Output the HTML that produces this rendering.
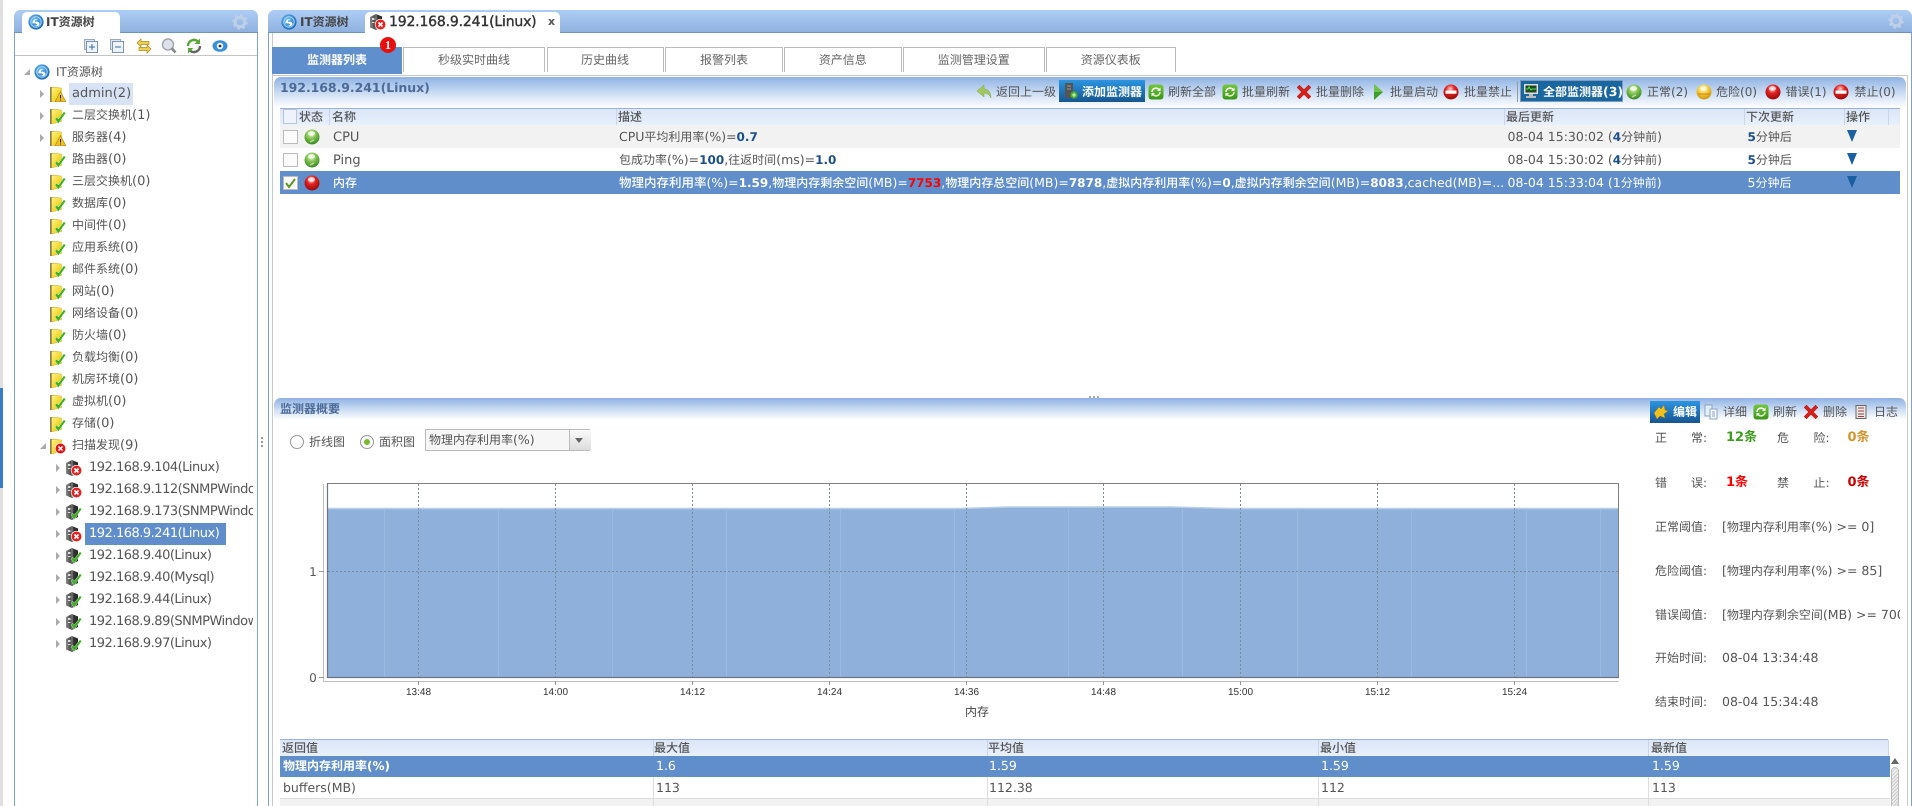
<!DOCTYPE html>
<html><head><meta charset="utf-8"><title>IT资源树</title>
<style>
html,body{margin:0;padding:0;background:#fff;width:1912px;height:806px;overflow:hidden}
#r{position:relative;width:1912px;height:806px;overflow:hidden;font:12px/16px "DejaVu Sans","Noto Sans CJK SC",sans-serif;color:#555;filter:blur(.3px);text-rendering:geometricPrecision}
#r div,#r svg.k{position:absolute;white-space:nowrap}
#r i{font-style:normal;font-size:13px}
#r .ip i{letter-spacing:-.5px}
#r b{font-size:12px;color:#1a4f8a;font-weight:700}
.hd{background:linear-gradient(#adcdf5,#8fb1de);border-bottom:1px solid #6f93c4}
.ar{width:0;height:0;border-left:4px solid #aaa;border-top:4px solid transparent;border-bottom:4px solid transparent}
.dn{width:0;height:0;border-right:6px solid #aaa;border-top:6px solid transparent}
.st{box-sizing:border-box;top:47px;height:25px;border:1.5px solid #bbb;border-bottom:0;text-align:center;line-height:24px;color:#666}
.ph{background:linear-gradient(#8fb2e3,#cfdff5 55%,#fff);border-radius:7px 7px 0 0}
.gh{background:linear-gradient(#dbe6f7,#e8f0fc);border-top:1px solid #9db3d3}
.sp{width:1px;background:#c9d5e8}
</style></head><body><div id="r">

<svg width="0" height="0" style="position:absolute">
<defs>
<linearGradient id="fy" x1="0" y1="0" x2="1" y2="1"><stop offset="0" stop-color="#fff388"/><stop offset=".6" stop-color="#f2d62c"/><stop offset="1" stop-color="#e0b818"/></linearGradient>
<linearGradient id="sv" x1="0" y1="0" x2="1" y2="0"><stop offset="0" stop-color="#8a8a8a"/><stop offset=".45" stop-color="#444"/><stop offset="1" stop-color="#222"/></linearGradient>
<radialGradient id="lg" cx=".4" cy=".35" r=".7"><stop offset="0" stop-color="#6fc0f4"/><stop offset="1" stop-color="#1467b8"/></radialGradient>
<radialGradient id="bg" cx=".45" cy=".3" r=".75"><stop offset="0" stop-color="#e8f8d0"/><stop offset=".45" stop-color="#7cc04a"/><stop offset="1" stop-color="#2d7f20"/></radialGradient>
<radialGradient id="br" cx=".45" cy=".3" r=".75"><stop offset="0" stop-color="#ffd0d0"/><stop offset=".4" stop-color="#e02020"/><stop offset="1" stop-color="#8f0808"/></radialGradient>
<radialGradient id="by" cx=".45" cy=".3" r=".75"><stop offset="0" stop-color="#fff8c0"/><stop offset=".5" stop-color="#f0c830"/><stop offset="1" stop-color="#c88a10"/></radialGradient>
<linearGradient id="rf" x1="0" y1="0" x2="0" y2="1"><stop offset="0" stop-color="#74c83c"/><stop offset="1" stop-color="#3a9418"/></linearGradient>
<symbol id="logo" viewBox="0 0 16 16"><circle cx="8" cy="8" r="7.6" fill="url(#lg)"/><circle cx="8" cy="8" r="5.2" fill="none" stroke="#a8d4f6" stroke-width="1"/><path d="M4.500 9.500c-.5-3.500 3-5.500 6-4-2.500-.5-4 1-3.500 2.500 2-.7 4.500 0 4.500 2 0 2-3.500 3-6 1.500 2 .5 3.500 0 3.500-1s-2.500-1.500-4.500-1z" fill="#fff"/></symbol>
<symbol id="fo" viewBox="0 0 16 16"><path d="M.5 1l9 .5v12l-9 2.500z" fill="#d8b61c"/><path d="M1.500 1.500l10 .5v11.500l-10 2.500z" fill="url(#fy)" stroke="#cfae1c" stroke-width=".4"/><path d="M.8 1v15" stroke="#6b6030" stroke-width="1.200"/></symbol>
<symbol id="fok" viewBox="0 0 16 16"><use href="#fo"/><path d="M5 11l3.300 4.500L15.800 5l-2-1.200-5.300 7.200-2-1.800z" fill="#3fae28" stroke="#e8ffe0" stroke-width=".4"/></symbol>
<symbol id="fwn" viewBox="0 0 16 16"><use href="#fo"/><path d="M10.500 5.500l5.300 10.300H5z" fill="#f0c020" stroke="#a88410" stroke-width=".6"/><path d="M10.500 9v3.500M10.500 13.500v1" stroke="#222" stroke-width="1"/></symbol>
<symbol id="fer" viewBox="0 0 16 16"><use href="#fo"/><circle cx="10.500" cy="10.500" r="5.300" fill="#d81818" stroke="#fff" stroke-width=".6"/><path d="M8.500 8.500l4 4M12.500 8.500l-4 4" stroke="#fff" stroke-width="1.500"/></symbol>
<symbol id="se" viewBox="0 0 16 16"><path d="M0 3l6-3 6 2.500v10.500l-6 3-6-2.500z" fill="url(#sv)"/><path d="M6 .5v15" stroke="#bbb" stroke-width=".7"/><path d="M2 4h2.500v2H2zM2 8h2.500v1H2z" fill="#ddd"/></symbol>
<symbol id="sok" viewBox="0 0 16 16"><use href="#se"/><path d="M5 11l3.300 4.500L15.800 5l-2-1.200-5.300 7.200-2-1.800z" fill="#3fae28" stroke="#e8ffe0" stroke-width=".4"/></symbol>
<symbol id="ser" viewBox="0 0 16 16"><use href="#se"/><circle cx="10.500" cy="10.500" r="5.300" fill="#e02424" stroke="#fff" stroke-width=".6"/><path d="M8.500 8.500l4 4M12.500 8.500l-4 4" stroke="#fff" stroke-width="1.600"/></symbol>
<symbol id="bgn" viewBox="0 0 16 16"><circle cx="8" cy="8" r="7.500" fill="url(#bg)"/><ellipse cx="7.500" cy="4.500" rx="3.500" ry="2.300" fill="#fff" opacity=".75"/><path d="M6 13l4-2" stroke="#bcd8a8" stroke-width="1.500"/></symbol>
<symbol id="brd" viewBox="0 0 16 16"><circle cx="8" cy="8" r="7.500" fill="url(#br)"/><ellipse cx="7.500" cy="4.500" rx="3.500" ry="2.300" fill="#fff" opacity=".7"/></symbol>
<symbol id="byl" viewBox="0 0 16 16"><circle cx="8" cy="8" r="7.500" fill="url(#by)"/><ellipse cx="7.500" cy="4.500" rx="3.500" ry="2.300" fill="#fff" opacity=".6"/><path d="M2 10h12" stroke="#d88a18" stroke-width="2" opacity=".6"/></symbol>
<symbol id="ban" viewBox="0 0 16 16"><circle cx="8" cy="8" r="7.500" fill="url(#br)"/><rect x="2.500" y="6.500" width="11" height="3.200" fill="#fff"/></symbol>
<symbol id="rfr" viewBox="0 0 16 16"><rect x=".5" y=".5" width="15" height="15" rx="3" fill="url(#rf)"/><path d="M4 8a4 4 0 0 1 7-2.500" fill="none" stroke="#fff" stroke-width="1.500"/><path d="M12 8a4 4 0 0 1-7 2.500" fill="none" stroke="#dff2c8" stroke-width="1.500"/><path d="M12.500 3.500v3.500h-3.500zM3.500 12.500v-3.500h3.500z" fill="#fff"/></symbol>
<symbol id="xx" viewBox="0 0 16 16"><path d="M1 3.500l2.500-2.500 4.500 4.500 4.500-4.500 2.500 2.500-4.500 4.500 4.500 4.500-2.500 2.500-4.500-4.500-4.500 4.500-2.500-2.500 4.500-4.500z" fill="#d4211c" stroke="#a01010" stroke-width=".4"/></symbol>
<symbol id="gear" viewBox="0 0 16 16"><circle cx="8" cy="8" r="4.800" fill="none" stroke="#bdd0e8" stroke-width="3"/><circle cx="8" cy="8" r="6.700" fill="none" stroke="#bdd0e8" stroke-width="2" stroke-dasharray="2.600 2.660"/></symbol>
</defs></svg>

<!-- outer strip -->
<div style="left:0;top:0;width:2.500px;height:806px;background:#e0e0e0"></div>
<div style="left:0;top:388px;width:2.500px;height:100px;background:#3a7cc8"></div>

<!-- left panel -->
<div style="left:14px;top:10px;width:242px;height:800px;border:1.200px solid #7f9fd6;border-radius:7px 7px 0 0;background:#fff;box-sizing:content-box"></div>
<div class="hd" style="left:14px;top:10px;width:244px;height:22px;border-radius:7px 7px 0 0"></div>
<div style="left:22px;top:12px;width:98px;height:21px;background:#fff;border-radius:5px 5px 0 0"></div>
<svg class="k" style="left:28px;top:14px" width="16" height="16"><use href="#logo"/></svg>
<div style="left:46px;top:14px;font-weight:700;color:#444">IT资源树</div>
<svg class="k" style="left:232px;top:14px" width="16" height="16"><use href="#gear"/></svg>
<div style="left:15px;top:55px;width:242px;height:1px;background:#c4c4c4"></div>

<svg class="k" style="left:83px;top:38px" width="146" height="16" viewBox="0 0 146 16">
<rect x="1.500" y="1.500" width="10" height="10" fill="#dfe5ee" stroke="#9aa8bc"/><rect x="3.500" y="3.500" width="11" height="11" fill="#eef3fa" stroke="#7d93b4"/><path d="M6 9h6M9 6v6" stroke="#3a6ea8"/>
<rect x="27.500" y="1.500" width="10" height="10" fill="#dfe5ee" stroke="#9aa8bc"/><rect x="29.500" y="3.500" width="11" height="11" fill="#eef3fa" stroke="#7d93b4"/><path d="M32 9h6" stroke="#3a6ea8"/>
<path d="M54 5l4-4v2.500h8v3h-8V9zM68 11l-4-4v2.500h-8v3h8V15z" fill="#f0cf50" stroke="#a88a20" stroke-width=".7"/>
<circle cx="85" cy="6.500" r="5.500" fill="#dfe2e8" stroke="#a0a4ac" stroke-width="1.400"/><path d="M88.500 10l4 4.500" stroke="#888" stroke-width="2.800"/>
<path d="M105 8a6 6 0 0 1 10-4.500" fill="none" stroke="#5aa838" stroke-width="2.400"/><path d="M117 8a6 6 0 0 1-10 4.500" fill="none" stroke="#666" stroke-width="2.400"/><path d="M117 .5V6h-5.500zM105 15.500V10h5.500z" fill="#5aa838"/>
<ellipse cx="137" cy="8" rx="7.500" ry="5.800" fill="#3a90d8"/><circle cx="137" cy="8" r="3.200" fill="#fff"/><circle cx="137" cy="8" r="1.400" fill="#234"/>
</svg>

<!-- tree -->
<div class="dn" style="left:24px;top:69px"></div>
<svg class="k" style="left:34px;top:64px" width="16" height="16"><use href="#logo"/></svg>
<div style="left:56px;top:64px">IT资源树</div>
<div style="left:69px;top:83px;width:64px;height:22px;background:#d8e4f6"></div>

<div class="ar" style="left:40px;top:90px"></div><svg class="k" style="left:50px;top:86px" width="16" height="16"><use href="#fwn"/></svg><div style="left:72px;top:85px"><i>admin(2)</i></div>
<div class="ar" style="left:40px;top:112px"></div><svg class="k" style="left:50px;top:108px" width="16" height="16"><use href="#fok"/></svg><div style="left:72px;top:107px">二层交换机<i>(1)</i></div>
<div class="ar" style="left:40px;top:134px"></div><svg class="k" style="left:50px;top:130px" width="16" height="16"><use href="#fwn"/></svg><div style="left:72px;top:129px">服务器<i>(4)</i></div>
<svg class="k" style="left:50px;top:152px" width="16" height="16"><use href="#fok"/></svg><div style="left:72px;top:151px">路由器<i>(0)</i></div>
<svg class="k" style="left:50px;top:174px" width="16" height="16"><use href="#fok"/></svg><div style="left:72px;top:173px">三层交换机<i>(0)</i></div>
<svg class="k" style="left:50px;top:196px" width="16" height="16"><use href="#fok"/></svg><div style="left:72px;top:195px">数据库<i>(0)</i></div>
<svg class="k" style="left:50px;top:218px" width="16" height="16"><use href="#fok"/></svg><div style="left:72px;top:217px">中间件<i>(0)</i></div>
<svg class="k" style="left:50px;top:240px" width="16" height="16"><use href="#fok"/></svg><div style="left:72px;top:239px">应用系统<i>(0)</i></div>
<svg class="k" style="left:50px;top:262px" width="16" height="16"><use href="#fok"/></svg><div style="left:72px;top:261px">邮件系统<i>(0)</i></div>
<svg class="k" style="left:50px;top:284px" width="16" height="16"><use href="#fok"/></svg><div style="left:72px;top:283px">网站<i>(0)</i></div>
<svg class="k" style="left:50px;top:306px" width="16" height="16"><use href="#fok"/></svg><div style="left:72px;top:305px">网络设备<i>(0)</i></div>
<svg class="k" style="left:50px;top:328px" width="16" height="16"><use href="#fok"/></svg><div style="left:72px;top:327px">防火墙<i>(0)</i></div>
<svg class="k" style="left:50px;top:350px" width="16" height="16"><use href="#fok"/></svg><div style="left:72px;top:349px">负载均衡<i>(0)</i></div>
<svg class="k" style="left:50px;top:372px" width="16" height="16"><use href="#fok"/></svg><div style="left:72px;top:371px">机房环境<i>(0)</i></div>
<svg class="k" style="left:50px;top:394px" width="16" height="16"><use href="#fok"/></svg><div style="left:72px;top:393px">虚拟机<i>(0)</i></div>
<svg class="k" style="left:50px;top:416px" width="16" height="16"><use href="#fok"/></svg><div style="left:72px;top:415px">存储<i>(0)</i></div>
<div class="dn" style="left:40px;top:443px"></div><svg class="k" style="left:50px;top:438px" width="16" height="16"><use href="#fer"/></svg><div style="left:72px;top:437px">扫描发现<i>(9)</i></div>

<div style="left:85px;top:523px;width:141px;height:22px;background:#5f8ecb"></div>
<div class="ar" style="left:56px;top:464px"></div><svg class="k" style="left:66px;top:460px" width="16" height="16"><use href="#ser"/></svg><div class="ip" style="left:89px;top:459px;width:164px;overflow:hidden"><i>192.168.9.104(Linux)</i></div>
<div class="ar" style="left:56px;top:486px"></div><svg class="k" style="left:66px;top:482px" width="16" height="16"><use href="#ser"/></svg><div class="ip" style="left:89px;top:481px;width:164px;overflow:hidden"><i>192.168.9.112(SNMPWindows)</i></div>
<div class="ar" style="left:56px;top:508px"></div><svg class="k" style="left:66px;top:504px" width="16" height="16"><use href="#sok"/></svg><div class="ip" style="left:89px;top:503px;width:164px;overflow:hidden"><i>192.168.9.173(SNMPWindows)</i></div>
<div class="ar" style="left:56px;top:530px"></div><svg class="k" style="left:66px;top:526px" width="16" height="16"><use href="#ser"/></svg><div class="ip" style="left:89px;top:525px;color:#fff"><i>192.168.9.241(Linux)</i></div>
<div class="ar" style="left:56px;top:552px"></div><svg class="k" style="left:66px;top:548px" width="16" height="16"><use href="#sok"/></svg><div class="ip" style="left:89px;top:547px"><i>192.168.9.40(Linux)</i></div>
<div class="ar" style="left:56px;top:574px"></div><svg class="k" style="left:66px;top:570px" width="16" height="16"><use href="#sok"/></svg><div class="ip" style="left:89px;top:569px"><i>192.168.9.40(Mysql)</i></div>
<div class="ar" style="left:56px;top:596px"></div><svg class="k" style="left:66px;top:592px" width="16" height="16"><use href="#sok"/></svg><div class="ip" style="left:89px;top:591px"><i>192.168.9.44(Linux)</i></div>
<div class="ar" style="left:56px;top:618px"></div><svg class="k" style="left:66px;top:614px" width="16" height="16"><use href="#sok"/></svg><div class="ip" style="left:89px;top:613px;width:164px;overflow:hidden"><i>192.168.9.89(SNMPWindows)</i></div>
<div class="ar" style="left:56px;top:640px"></div><svg class="k" style="left:66px;top:636px" width="16" height="16"><use href="#sok"/></svg><div class="ip" style="left:89px;top:635px"><i>192.168.9.97(Linux)</i></div>

<!-- vertical splitter -->
<div style="left:261px;top:437px;width:2px;height:2px;background:#999"></div>
<div style="left:261px;top:441px;width:2px;height:2px;background:#999"></div>
<div style="left:261px;top:445px;width:2px;height:2px;background:#999"></div>

<!-- main panel -->
<div style="left:268px;top:10px;width:1642px;height:800px;border:1.200px solid #7f9fd6;border-radius:7px 7px 0 0"></div>
<div class="hd" style="left:268px;top:10px;width:1644px;height:22px;border-radius:7px 7px 0 0"></div>
<svg class="k" style="left:1888px;top:13px" width="16" height="16"><use href="#gear"/></svg>
<svg class="k" style="left:281px;top:14px" width="16" height="16"><use href="#logo"/></svg>
<div style="left:300px;top:14px;font-weight:700;color:#444">IT资源树</div>
<div style="left:364.500px;top:12px;width:195px;height:21px;background:#fff;border-radius:5px 5px 0 0"></div>
<svg class="k" style="left:370px;top:14px" width="16" height="16"><use href="#ser"/></svg>
<div style="left:389px;top:14px;color:#333;font-size:14px;font-weight:400;-webkit-text-stroke:.4px #333;letter-spacing:-.18px">192.168.9.241(Linux)</div>
<div style="left:548px;top:14px;font-weight:700;color:#555;font-size:11px">x</div>

<div style="left:272px;top:33px;width:1px;height:780px;background:#c8c8c8"></div>
<div style="left:1907px;top:75px;width:1px;height:740px;background:#c8c8c8"></div>
<div style="left:272px;top:75px;width:1636px;height:1px;background:#c8c8c8"></div>

<!-- sub tabs -->
<div class="st" style="left:272px;width:130px;height:27px;background:#5f8fcc;border-color:#5f8fcc;color:#fff;font-weight:700">监测器列表</div>
<div class="st" style="left:403px;width:142px">秒级实时曲线</div>
<div class="st" style="left:546.500px;width:117px">历史曲线</div>
<div class="st" style="left:665px;width:118px">报警列表</div>
<div class="st" style="left:784px;width:117.500px">资产信息</div>
<div class="st" style="left:903px;width:141.500px">监测管理设置</div>
<div class="st" style="left:1046px;width:129.500px">资源仪表板</div>
<div style="left:380px;top:37px;width:16px;height:16px;border-radius:8px;background:#e80f0f;color:#fff;text-align:center;font-weight:700;font-size:12px;line-height:16px;font-family:'Liberation Serif',serif">1</div>

<!-- top section header -->
<div class="ph" style="left:274px;top:77px;width:1632px;height:31px"></div>
<div style="left:280px;top:80px;color:#4b6a98;font-weight:700;font-size:12.500px;letter-spacing:-.05px">192.168.9.241(Linux)</div>

<svg class="k" style="left:976px;top:84px" width="16" height="16" viewBox="0 0 16 16"><path d="M1 7l7-6v4c4 0 7 3 7 9-2-4-4-5-7-5v4z" fill="#a4c860" stroke="#7e9e44" stroke-width=".5"/></svg>
<div style="left:996px;top:84px">返回上一级</div>
<div style="left:1059px;top:80px;width:86px;height:22px;background:linear-gradient(#2b95e2,#16568f)"></div>
<svg class="k" style="left:1063px;top:83px" width="16" height="16" viewBox="0 0 16 16"><rect x="2" y="0" width="8" height="15" fill="#555"/><path d="M4 3h4M4 6h4" stroke="#999"/><circle cx="11" cy="12" r="3.600" fill="#4cb02c"/><path d="M9 12h4M11 10v4" stroke="#dff5cc"/></svg>
<div style="left:1082px;top:84px;color:#fff;font-weight:700">添加监测器</div>
<svg class="k" style="left:1148px;top:84px" width="16" height="16"><use href="#rfr"/></svg><div style="left:1168px;top:84px">刷新全部</div>
<svg class="k" style="left:1222px;top:84px" width="16" height="16"><use href="#rfr"/></svg><div style="left:1242px;top:84px">批量刷新</div>
<svg class="k" style="left:1296px;top:84px" width="16" height="16"><use href="#xx"/></svg><div style="left:1316px;top:84px">批量删除</div>
<svg class="k" style="left:1370px;top:84px" width="16" height="16" viewBox="0 0 16 16"><path d="M4 0l9 8-9 8z" fill="#3c9c2c"/><path d="M4 0l9 8H4z" fill="#6fc24a"/></svg><div style="left:1390px;top:84px">批量启动</div>
<svg class="k" style="left:1443px;top:84px" width="16" height="16"><use href="#ban"/></svg><div style="left:1464px;top:84px">批量禁止</div>
<div style="left:1517px;top:81px;width:1px;height:21px;background:#999"></div>
<div style="left:1520px;top:80px;width:103px;height:22px;background:#1a669f;box-sizing:border-box;border:1px solid #7b9cc0"></div>
<svg class="k" style="left:1523px;top:83px" width="16" height="16" viewBox="0 0 16 16"><rect x="1" y="1" width="14" height="10" fill="#ddd"/><rect x="2.500" y="2.500" width="11" height="7" fill="#1c4a24"/><path d="M3 6h2l1-2 2 3 1-1h4" stroke="#4fe04f" fill="none"/><path d="M6 11h4v2H6zM3 13h10v2H3z" fill="#bbb"/></svg>
<div style="left:1543px;top:84px;color:#fff;font-weight:700">全部监测器<i style="color:#fff;font-size:12.500px">(3)</i></div>
<svg class="k" style="left:1626px;top:84px" width="16" height="16"><use href="#bgn"/></svg><div style="left:1647px;top:84px">正常<i style="font-size:12px">(2)</i></div>
<svg class="k" style="left:1696px;top:84px" width="16" height="16"><use href="#byl"/></svg><div style="left:1716px;top:84px">危险<i style="font-size:12px">(0)</i></div>
<svg class="k" style="left:1765px;top:84px" width="16" height="16"><use href="#brd"/></svg><div style="left:1785.500px;top:84px">错误<i style="font-size:12px">(1)</i></div>
<svg class="k" style="left:1833px;top:84px" width="16" height="16"><use href="#ban"/></svg><div style="left:1854.500px;top:84px">禁止<i style="font-size:12px">(0)</i></div>

<!-- grid header -->
<div class="gh" style="left:280px;top:108px;width:1620px;height:16px"></div>
<div style="left:282.500px;top:109px;width:14px;height:15px;background:#eef3fb;border:1px solid #b8c4d8;box-sizing:border-box"></div>
<div style="left:299px;top:109px;font-weight:500">状态</div>
<div class="sp" style="left:329px;top:109px;height:16px"></div>
<div style="left:332px;top:109px;font-weight:500">名称</div>
<div class="sp" style="left:615.500px;top:109px;height:16px"></div>
<div style="left:618px;top:109px;font-weight:500">描述</div>
<div class="sp" style="left:1503.500px;top:109px;height:16px"></div>
<div style="left:1506px;top:109px;font-weight:500">最后更新</div>
<div class="sp" style="left:1743.500px;top:109px;height:16px"></div>
<div style="left:1746px;top:109px;font-weight:500">下次更新</div>
<div class="sp" style="left:1843.500px;top:109px;height:16px"></div>
<div style="left:1846px;top:109px;font-weight:500">操作</div>
<div class="sp" style="left:1888px;top:109px;height:16px"></div>

<!-- rows -->
<div style="left:280px;top:125px;width:1620px;height:23px;background:#f2f2f2"></div>
<div style="left:280px;top:171px;width:1620px;height:23px;background:#5f8ecb"></div>

<div style="left:283px;top:130px;width:15px;height:14px;background:#fbfbfb;border:1px solid #bbb;box-sizing:border-box"></div>
<svg class="k" style="left:304px;top:129px" width="16" height="16"><use href="#bgn"/></svg>
<div style="left:333px;top:130px;font-size:13px">CPU</div>
<div style="left:619px;top:129px"><i style="font-size:12.500px">CPU</i>平均利用率<i style="font-size:12.500px">(%)=</i><b>0.7</b></div>
<div style="left:1507.500px;top:129px"><i style="font-size:12.500px">08-04 15:30:02 (</i><b>4</b>分钟前<i style="font-size:12.500px">)</i></div>
<div style="left:1747.500px;top:129px"><b>5</b>分钟后</div>
<svg class="k" style="left:1847px;top:130px" width="10" height="12"><path d="M0 0h10L5 12z" fill="#1a5f9f"/></svg>

<div style="left:283px;top:153px;width:15px;height:14px;background:#fbfbfb;border:1px solid #bbb;box-sizing:border-box"></div>
<svg class="k" style="left:304px;top:152px" width="16" height="16"><use href="#bgn"/></svg>
<div style="left:333px;top:153px;font-size:13px">Ping</div>
<div style="left:619px;top:152px">包成功率<i style="font-size:12.500px">(%)=</i><b>100</b><i style="font-size:12.500px">,</i>往返时间<i style="font-size:12.500px">(ms)=</i><b>1.0</b></div>
<div style="left:1507.500px;top:152px"><i style="font-size:12.500px">08-04 15:30:02 (</i><b>4</b>分钟前<i style="font-size:12.500px">)</i></div>
<div style="left:1747.500px;top:152px"><b>5</b>分钟后</div>
<svg class="k" style="left:1847px;top:153px" width="10" height="12"><path d="M0 0h10L5 12z" fill="#1a5f9f"/></svg>

<div style="left:283px;top:176px;width:15px;height:14px;background:#fbfbfb;border:1px solid #bbb;box-sizing:border-box"></div>
<svg class="k" style="left:284px;top:177px" width="13" height="12"><path d="M2 6l3 4 6-8" fill="none" stroke="#5a9a20" stroke-width="2"/></svg>
<svg class="k" style="left:304px;top:175px" width="16" height="16"><use href="#brd"/></svg>
<div style="left:333px;top:175px;color:#fff;font-weight:500">内存</div>
<div style="left:619px;top:175px;color:#fff;font-weight:500"><i style="font-size:12.500px;color:#fff">物理内存利用率(%)=</i><b style="color:#fff">1.59</b><i style="font-size:12.500px">,</i><span>物理内存剩余空间</span><i style="font-size:12.500px">(MB)=</i><b style="color:#f00">7753</b><i style="font-size:12.500px">,</i>物理内存总空间<i style="font-size:12.500px">(MB)=</i><b style="color:#fff">7878</b><i style="font-size:12.500px">,</i>虚拟内存利用率<i style="font-size:12.500px">(%)=</i><b style="color:#fff">0</b><i style="font-size:12.500px">,</i>虚拟内存剩余空间<i style="font-size:12.500px">(MB)=</i><b style="color:#fff">8083</b><i style="font-size:12.500px">,cached(MB)=...</i></div>
<div style="left:1507.500px;top:175px;color:#fff"><i style="font-size:12.500px">08-04 15:33:04 (1</i>分钟前<i style="font-size:12.500px">)</i></div>
<div style="left:1747.500px;top:175px;color:#fff"><i style="font-size:12.500px">5</i>分钟后</div>
<svg class="k" style="left:1847px;top:176px" width="10" height="12"><path d="M0 0h10L5 12z" fill="#1a5f9f"/></svg>

<!-- horizontal splitter -->
<div style="left:1089px;top:396px;width:2px;height:2px;background:#aaa"></div>
<div style="left:1093px;top:396px;width:2px;height:2px;background:#aaa"></div>
<div style="left:1097px;top:396px;width:2px;height:2px;background:#aaa"></div>

<!-- lower section header -->
<div class="ph" style="left:274px;top:398px;width:1632px;height:22px"></div>
<div style="left:280px;top:401px;color:#4b6a98;font-weight:700">监测器概要</div>

<div style="left:1650px;top:401px;width:50px;height:22px;background:linear-gradient(#2b95e2,#16568f)"></div>
<svg class="k" style="left:1653px;top:404px" width="16" height="16" viewBox="0 0 16 16"><path d="M1 9l5-6 2 2 3-4 1 5 3 1-4 3 1 4-5-2-3 3z" fill="#f0c020" stroke="#a07810" stroke-width=".5"/></svg>
<div style="left:1673px;top:404px;color:#fff;font-weight:700">编辑</div>
<svg class="k" style="left:1703px;top:404px" width="16" height="16" viewBox="0 0 16 16"><path d="M2 1h7v11H2z" fill="#e4eef8" stroke="#8aa4c4"/><path d="M7 5h7v10H7z" fill="#f4f8fd" stroke="#8aa4c4"/><path d="M9 8h3M9 10h3M9 12h3" stroke="#8aa4c4"/></svg>
<div style="left:1723px;top:404px">详细</div>
<svg class="k" style="left:1753px;top:404px" width="16" height="16"><use href="#rfr"/></svg><div style="left:1773px;top:404px">刷新</div>
<svg class="k" style="left:1803px;top:404px" width="16" height="16"><use href="#xx"/></svg><div style="left:1823px;top:404px">删除</div>
<svg class="k" style="left:1853px;top:404px" width="16" height="16" viewBox="0 0 16 16"><path d="M3 1.500h10v13H3z" fill="#e8e8e8" stroke="#666"/><path d="M5 4h6M5 7h6M5 10h6M5 12.500h6" stroke="#a04040"/></svg><div style="left:1874px;top:404px">日志</div>

<!-- chart controls -->
<div style="left:290px;top:434.500px;width:12px;height:12px;border:1.200px solid #999;border-radius:50%;background:#fff"></div>
<div style="left:309px;top:434px">折线图</div>
<div style="left:360px;top:434.500px;width:12px;height:12px;border:1.200px solid #999;border-radius:50%;background:#fff"></div>
<div style="left:364px;top:439px;width:6px;height:6px;border-radius:50%;background:#7ab830"></div>
<div style="left:379px;top:434px">面积图</div>
<div style="left:425px;top:429px;width:165px;height:22px;border:1px solid #bbb;box-sizing:border-box;background:#f6f6f6"></div>
<div style="left:568.500px;top:430px;width:21px;height:20px;background:linear-gradient(#fafafa,#dcdcdc);border-left:1px solid #bbb"></div>
<svg class="k" style="left:575px;top:438px" width="8" height="5"><path d="M0 0h8L4 5z" fill="#666"/></svg>
<div style="left:429px;top:432px">物理内存利用率<i style="font-size:12.500px">(%)</i></div>

<!-- chart -->
<svg class="k" style="left:0;top:0" width="1912" height="806" viewBox="0 0 1912 806">
<path d="M323.500 484V682" stroke="#bdbdbd"/>
<rect x="327.500" y="483.500" width="1291" height="194" fill="#fff" stroke="#808080"/>
<path d="M328 508.500 L960 508.500 L1010 507 L1170 507 L1230 508.500 L1618 508.500 V677 H328Z" fill="#8eb0db"/>
<path d="M328 508.500 L960 508.500 L1010 507 L1170 507 L1230 508.500 L1618 508.500" fill="none" stroke="#b9cde7" stroke-width="1.500"/>
<g stroke="#9cbae0" stroke-width="1"><path d="M384.500 510V677M498.500 510V677M612.500 510V677M726.500 510V677M840.500 510V677M954.500 510V677M1068.500 509V677M1182.500 509V677M1297.500 510V677M1411.500 510V677M1526.500 510V677M1600.500 510V677"/></g>
<g stroke="#7b8b9e" stroke-width="1" stroke-dasharray="2 2"><path d="M418.500 484V677M555.500 484V677M692.500 484V677M829.500 484V677M966.500 484V677M1103.500 484V677M1240.500 484V677M1377.500 484V677M1514.500 484V677"/><path d="M328 571.500H1618"/></g>
<path d="M327.500 483.500V677.500H1618.500" fill="none" stroke="#6f7482" stroke-width="1.200"/>
<path d="M323 681.500H1618.500" stroke="#bdbdbd"/>
<g stroke="#999"><path d="M319 571.500h5M319 677.500h5M418.500 681v4M555.500 681v4M692.500 681v4M829.500 681v4M966.500 681v4M1103.500 681v4M1240.500 681v4M1377.500 681v4M1514.500 681v4"/></g>
<g font-family="Liberation Sans,sans-serif" font-size="10" fill="#333" text-anchor="middle">
<text x="418.500" y="695">13:48</text><text x="555.500" y="695">14:00</text><text x="692.500" y="695">14:12</text><text x="829.500" y="695">14:24</text><text x="966.500" y="695">14:36</text><text x="1103.500" y="695">14:48</text><text x="1240.500" y="695">15:00</text><text x="1377.500" y="695">15:12</text><text x="1514.500" y="695">15:24</text>
</g>
<g font-family="DejaVu Sans,sans-serif" font-size="12" fill="#555" text-anchor="middle"><text x="313" y="576">1</text><text x="313" y="682">0</text></g>
<text x="977" y="716" font-family="Noto Sans CJK SC,sans-serif" font-size="12" fill="#444" text-anchor="middle">内存</text>
</svg>

<!-- stats -->
<div style="left:1655px;top:430px">正</div><div style="left:1691px;top:430px">常<i style="font-size:12px">:</i></div>
<div style="left:1726px;top:430px;font-weight:700;color:#3c9c1c;font-size:13px">12条</div>
<div style="left:1777px;top:430px">危</div><div style="left:1813.500px;top:430px">险<i style="font-size:12px">:</i></div>
<div style="left:1847.500px;top:430px;font-weight:700;color:#d4942a;font-size:13px">0条</div>
<div style="left:1655px;top:475px">错</div><div style="left:1691px;top:475px">误<i style="font-size:12px">:</i></div>
<div style="left:1726px;top:475px;font-weight:700;color:#f00;font-size:13px">1条</div>
<div style="left:1777px;top:475px">禁</div><div style="left:1813.500px;top:475px">止<i style="font-size:12px">:</i></div>
<div style="left:1847.500px;top:475px;font-weight:700;color:#c00;font-size:13px">0条</div>
<div style="left:1655px;top:519px">正常阈值<i style="font-size:12px">:</i></div>
<div style="left:1722px;top:519px"><i style="font-size:12.500px">[</i>物理内存利用率<i style="font-size:12.500px">(%) &gt;= 0]</i></div>
<div style="left:1655px;top:563px">危险阈值<i style="font-size:12px">:</i></div>
<div style="left:1722px;top:563px"><i style="font-size:12.500px">[</i>物理内存利用率<i style="font-size:12.500px">(%) &gt;= 85]</i></div>
<div style="left:1655px;top:607px">错误阈值<i style="font-size:12px">:</i></div>
<div style="left:1722px;top:607px;width:178px;overflow:hidden"><i style="font-size:12.500px">[</i>物理内存剩余空间<i style="font-size:12.500px">(MB) &gt;= 7000]</i></div>
<div style="left:1655px;top:650px">开始时间<i style="font-size:12px">:</i></div>
<div style="left:1722px;top:650px"><i style="font-size:12.500px">08-04 13:34:48</i></div>
<div style="left:1655px;top:694px">结束时间<i style="font-size:12px">:</i></div>
<div style="left:1722px;top:694px"><i style="font-size:12.500px">08-04 15:34:48</i></div>

<!-- bottom grid -->
<div class="gh" style="left:280px;top:739px;width:1608px;height:16px"></div>
<div style="left:280px;top:756px;width:1610px;height:21px;background:#5f8ecb"></div>
<div style="left:280px;top:798px;width:1610px;height:1px;background:#ddd"></div>
<div style="left:280px;top:799px;width:1610px;height:7px;background:#f2f2f2"></div>
<div class="sp" style="left:653px;top:740px;height:16px"></div>
<div class="sp" style="left:987px;top:740px;height:16px"></div>
<div class="sp" style="left:1317.500px;top:740px;height:16px"></div>
<div class="sp" style="left:1648px;top:740px;height:16px"></div>
<div class="sp" style="left:1888px;top:740px;height:16px"></div>
<div style="left:653px;top:777px;width:1px;height:29px;background:#ddd"></div>
<div style="left:987px;top:777px;width:1px;height:29px;background:#ddd"></div>
<div style="left:1317.500px;top:777px;width:1px;height:29px;background:#ddd"></div>
<div style="left:1648px;top:777px;width:1px;height:29px;background:#ddd"></div>
<div style="left:282px;top:740px;font-weight:500">返回值</div>
<div style="left:654px;top:740px;font-weight:500">最大值</div>
<div style="left:988px;top:740px;font-weight:500">平均值</div>
<div style="left:1320px;top:740px;font-weight:500">最小值</div>
<div style="left:1651px;top:740px;font-weight:500">最新值</div>
<div style="left:283px;top:758px;color:#fff;font-weight:700">物理内存利用率<i style="font-size:12px;color:#fff">(%)</i></div>
<div style="left:656px;top:758px;color:#fff;font-size:12.500px;font-weight:500">1.6</div>
<div style="left:989px;top:758px;color:#fff;font-size:12.500px;font-weight:500">1.59</div>
<div style="left:1321px;top:758px;color:#fff;font-size:12.500px;font-weight:500">1.59</div>
<div style="left:1652px;top:758px;color:#fff;font-size:12.500px;font-weight:500">1.59</div>
<div style="left:283px;top:780px;font-size:12.500px">buffers(MB)</div>
<div style="left:656px;top:780px;font-size:12.500px">113</div>
<div style="left:989px;top:780px;font-size:12.500px">112.38</div>
<div style="left:1321px;top:780px;font-size:12.500px">112</div>
<div style="left:1652px;top:780px;font-size:12.500px">113</div>
<!-- scrollbar -->
<div style="left:1890px;top:756px;width:10px;height:50px;background:#fff"></div>
<svg class="k" style="left:1891px;top:758px" width="8" height="6"><path d="M4 0l4 6H0z" fill="#666"/></svg>
<div style="left:1891px;top:767px;width:8px;height:40px;border-radius:4px 4px 0 0;border:1px solid #bbb;box-sizing:border-box;background:repeating-linear-gradient(135deg,#ccc 0 1px,#eee 1px 2.500px)"></div>

</div></body></html>
